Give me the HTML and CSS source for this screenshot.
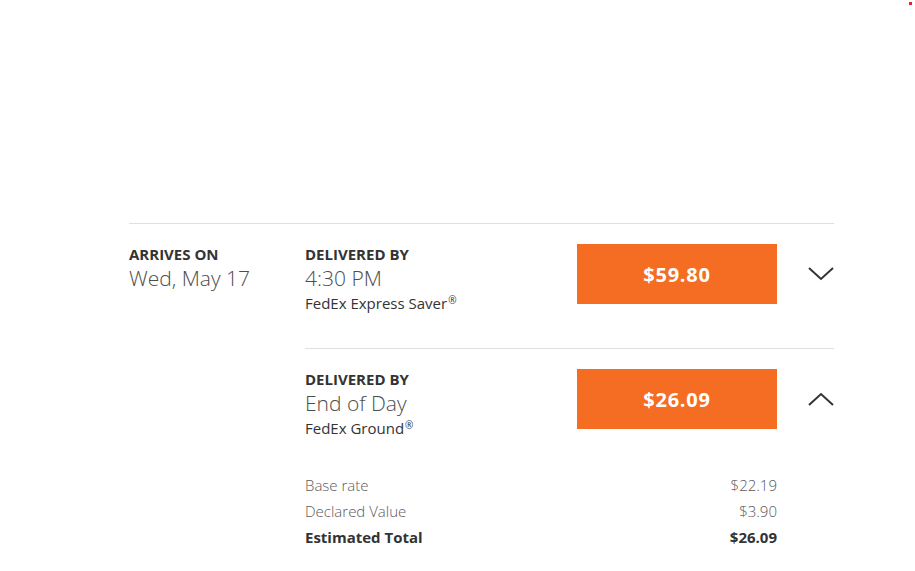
FILE: index.html
```html
<!DOCTYPE html>
<html>
  <head>
    <link rel="stylesheet" href="styles.css">
  </head>
  <body>
    <span class="dot"></span>
    <div class="rates">
      <div class="day">
        <div class="arrives">
          <div class="label">ARRIVES ON</div>
          <div class="big">Wed, May 17</div>
        </div>
        <div class="options">
          <div class="option">
            <div class="info">
              <div class="label">DELIVERED BY</div>
              <div class="big">4:30 PM</div>
              <div class="service">FedEx Express Saver<sup>&reg;</sup></div>
            </div>
            <button class="price">$59.80</button>
            <div class="toggle">
              <svg width="26" height="14" viewBox="0 0 26 14"><polyline points="1,1 13,12 25,1" fill="none" stroke="#333" stroke-width="2"/></svg>
            </div>
          </div>
          <div class="option open">
            <div class="info">
              <div class="label">DELIVERED BY</div>
              <div class="big">End of Day</div>
              <div class="service">FedEx Ground<sup>&reg;</sup></div>
            </div>
            <button class="price">$26.09</button>
            <div class="toggle">
              <svg width="26" height="14" viewBox="0 0 26 14"><polyline points="1,13 13,2 25,13" fill="none" stroke="#333" stroke-width="2"/></svg>
            </div>
          </div>
          <div class="breakdown">
            <div class="line"><span>Base rate</span><span>$22.19</span></div>
            <div class="line"><span>Declared Value</span><span>$3.90</span></div>
            <div class="line total"><span>Estimated Total</span><span>$26.09</span></div>
          </div>
        </div>
      </div>
    </div>
  </body>
</html>
```

FILE: styles.css
```css
body {
  margin: 0;
  background-color: #fff;
  color: #333;
  font-family: 'Open Sans', 'Noto Sans', sans-serif;
}

.dot {
  position: absolute;
  top: 2px;
  left: 909px;
  width: 3px;
  height: 3px;
  background-color: #e8212b;
}

.rates {
  margin: 223px 0 0 129px;
  width: 705px;
  border-top: 1px solid #e0e0e0;
}

.day {
  display: flex;
}

.arrives {
  width: 176px;
  padding-top: 20px;
}

.options {
  flex: 1;
}

.option {
  display: flex;
  align-items: flex-start;
  padding: 20px 0 34px;
}

.option.open {
  border-top: 1px solid #e0e0e0;
  padding-bottom: 0;
}

.info {
  width: 272px;
}

.label {
  font-size: 15px;
  font-weight: 700;
  line-height: 20px;
  color: #333;
}

.big {
  font-size: 21px;
  font-weight: 300;
  line-height: 28px;
  color: #4d4d4d;
}

.service {
  font-size: 15px;
  line-height: 22px;
  color: #333;
}

.service sup {
  font-size: 10px;
  line-height: 0;
  vertical-align: 5px;
  margin-left: 1px;
}

.price {
  width: 200px;
  height: 60px;
  border: none;
  margin: 0;
  background-color: #f46d22;
  color: #fff;
  font-family: 'Open Sans', 'Noto Sans', sans-serif;
  font-size: 20px;
  font-weight: 700;
  letter-spacing: 0.8px;
  cursor: pointer;
}

.toggle {
  flex: 1;
  display: flex;
  justify-content: flex-end;
  padding-top: 23px;
}

.breakdown {
  width: 472px;
  padding-top: 33px;
}

.line {
  display: flex;
  justify-content: space-between;
  font-size: 15px;
  font-weight: 300;
  line-height: 26px;
  color: #5a5a5a;
}

.line.total {
  font-weight: 700;
  color: #333;
}
```
